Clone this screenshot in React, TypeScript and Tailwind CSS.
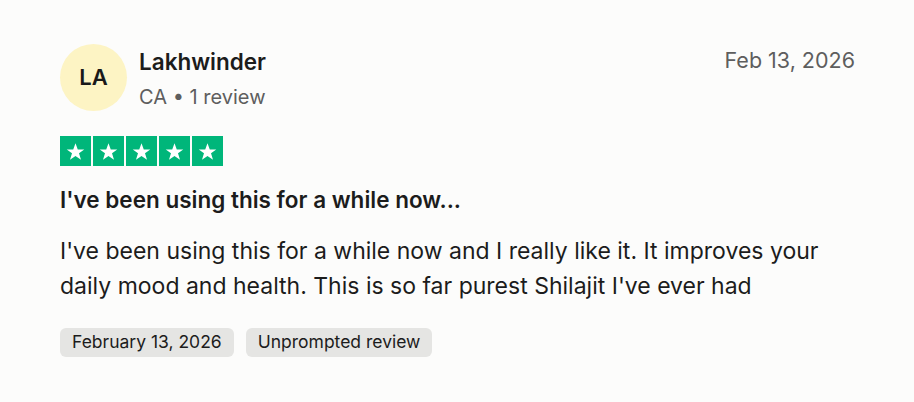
import React from 'react';

const Star = () => (
  <div className="w-[30.5px] h-[30px] bg-[#00b67a] flex items-center justify-center">
    <svg viewBox="0 0 24 24" className="w-[21px] h-[21px]" fill="#ffffff">
      <path d="M12 2.5l2.6 7.1h7.4l-6 4.5 2.3 7.4L12 17.1l-6.3 4.4L8 14.1 2 9.6h7.4z" />
    </svg>
  </div>
);

const Tag: React.FC<{ children: React.ReactNode }> = ({ children }) => (
  <span className="h-[29px] px-[12px] rounded-[6px] bg-[#e5e5e3] text-[17.5px] text-[#1c1c1c] flex items-center">
    {children}
  </span>
);

export default function App() {
  return (
    <div
      className="w-[914px] h-[402px] bg-[#fcfcfb] px-[60px] pt-[44px]"
      style={{ fontFamily: 'Inter, "Noto Sans", sans-serif' }}
    >
      <div className="flex justify-between items-start">
        <div className="flex items-start gap-[12px]">
          <div className="w-[67px] h-[67px] rounded-full bg-[#fdf4c4] flex items-center justify-center text-[22px] font-semibold text-[#191919]">
            LA
          </div>
          <div className="flex flex-col mt-[1px]">
            <span className="text-[22.5px] font-semibold text-[#1c1c1c] leading-[34px]">Lakhwinder</span>
            <span className="text-[20px] text-[#5e5e5e] leading-[37px]">CA • 1 review</span>
          </div>
        </div>
        <span className="text-[21.5px] text-[#5e5e5e] mr-[-1px]">Feb 13, 2026</span>
      </div>

      <div className="flex gap-[2.5px] mt-[20px]">
        <Star />
        <Star />
        <Star />
        <Star />
        <Star />
      </div>

      <h3 className="mt-[20px] text-[22.5px] font-semibold text-[#1c1c1c] leading-[28px]">
        I've been using this for a while now...
      </h3>

      <p className="mt-[20px] text-[23px] text-[#1c1c1c] leading-[35px]">
        I've been using this for a while now and I really like it. It improves your daily mood and health. This is so far purest Shilajit I've ever had
      </p>

      <div className="flex gap-[12px] mt-[24px]">
        <Tag>February 13, 2026</Tag>
        <Tag>Unprompted review</Tag>
      </div>
    </div>
  );
}
